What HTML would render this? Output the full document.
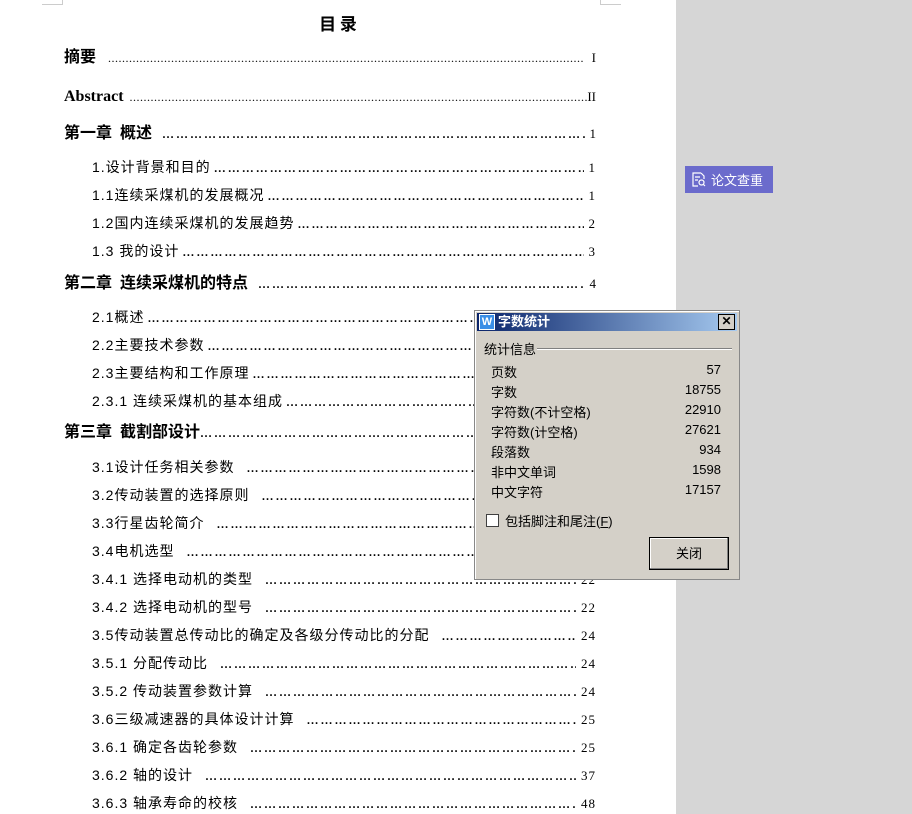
<!DOCTYPE html>
<html><head><meta charset="utf-8"><style>
body{margin:0;width:912px;height:814px;background:#d6d6d6;position:relative;overflow:hidden;font-family:"Liberation Serif","Noto Serif CJK SC","Noto Sans CJK SC",serif;color:#000}
.page{position:absolute;left:0;top:0;width:676px;height:814px;background:#fff}
.ln{position:absolute;display:flex;align-items:baseline;white-space:nowrap;height:20px;line-height:20px}
.ld{flex:1 1 0;min-width:0;overflow:hidden;white-space:nowrap;color:#000;font-family:"Liberation Serif",serif;font-size:12px;font-weight:bold;letter-spacing:2px;margin:0 5px 0 3px}
.ld::before{content:"…………………………………………………………………………………………………………………………………………………………………………………………………………"}
.ld.dot{font-weight:normal;letter-spacing:0.5px}
.ld.dot::before{content:"..........................................................................................................................................................................................................................................................................................."}
.pn{font-size:13px;font-family:"Liberation Serif",serif;font-weight:normal}
.h{font-weight:bold;font-size:16px;left:64px;width:532px;font-family:"Liberation Serif","Noto Sans CJK SC",sans-serif}
.s{font-size:14px;left:92px;width:504px;font-family:"Liberation Sans","Noto Sans CJK SC",sans-serif;letter-spacing:1px}
.dlg{position:absolute;left:474px;top:310px;width:264px;height:268px;background:#d4d0c8;border:1px solid #888;box-shadow:inset 1px 1px #fff;font-family:"Liberation Sans","Noto Sans CJK SC",sans-serif;font-size:13px}
.tb{position:absolute;left:2px;top:2px;right:2px;height:18px;background:linear-gradient(90deg,#0a246a,#a6caf0);color:#fff;font-weight:bold;font-size:13px;line-height:18px}
.r{position:absolute;left:16px;width:230px;display:flex;justify-content:space-between}
</style></head><body>
<div class="page">
<div style="position:absolute;left:42px;top:0;width:20px;height:4px;border:1px solid #ccc;border-top:none;border-left:none"></div>
<div style="position:absolute;left:600px;top:0;width:20px;height:4px;border:1px solid #ccc;border-top:none;border-right:none"></div>
<div style="position:absolute;left:0;width:676px;top:10px;text-align:center;font-weight:bold;font-size:17px;font-family:'Noto Sans CJK SC',sans-serif">目 录</div>

<div class="ln h" style="top:48px"><span>摘要</span><span class="ld dot" style="margin-left:12px;margin-right:8px"></span><span class="pn">I</span></div>
<div class="ln h" style="top:87px"><span>Abstract</span><span class="ld dot" style="margin-left:6px;margin-right:0"></span><span class="pn">II</span></div>
<div class="ln h" style="top:124px"><span>第一章&nbsp; 概述</span><span class="ld" style="margin-left:10px"></span><span class="pn">1</span></div>
<div class="ln s" style="top:157px"><span>1.设计背景和目的</span><span class="ld"></span><span class="pn">1</span></div>
<div class="ln s" style="top:185px"><span>1.1连续采煤机的发展概况</span><span class="ld"></span><span class="pn">1</span></div>
<div class="ln s" style="top:213px"><span>1.2国内连续采煤机的发展趋势</span><span class="ld"></span><span class="pn">2</span></div>
<div class="ln s" style="top:241px"><span>1.3 我的设计</span><span class="ld"></span><span class="pn">3</span></div>
<div class="ln h" style="top:274px"><span>第二章&nbsp; 连续采煤机的特点</span><span class="ld" style="margin-left:10px"></span><span class="pn">4</span></div>
<div class="ln s" style="top:307px"><span>2.1概述</span><span class="ld"></span><span class="pn">4</span></div>
<div class="ln s" style="top:335px"><span>2.2主要技术参数</span><span class="ld"></span><span class="pn">5</span></div>
<div class="ln s" style="top:363px"><span>2.3主要结构和工作原理</span><span class="ld"></span><span class="pn">6</span></div>
<div class="ln s" style="top:391px"><span>2.3.1 连续采煤机的基本组成</span><span class="ld"></span><span class="pn">6</span></div>
<div class="ln h" style="top:423px"><span>第三章&nbsp; 截割部设计</span><span class="ld" style="margin-left:0"></span><span class="pn">9</span></div>
<div class="ln s" style="top:457px"><span>3.1设计任务相关参数</span><span class="ld" style="margin-left:12px"></span><span class="pn">9</span></div>
<div class="ln s" style="top:485px"><span>3.2传动装置的选择原则</span><span class="ld" style="margin-left:12px"></span><span class="pn">10</span></div>
<div class="ln s" style="top:513px"><span>3.3行星齿轮简介</span><span class="ld" style="margin-left:12px"></span><span class="pn">12</span></div>
<div class="ln s" style="top:541px"><span>3.4电机选型</span><span class="ld" style="margin-left:12px"></span><span class="pn">21</span></div>
<div class="ln s" style="top:569px"><span>3.4.1 选择电动机的类型</span><span class="ld" style="margin-left:12px"></span><span class="pn">22</span></div>
<div class="ln s" style="top:597px"><span>3.4.2 选择电动机的型号</span><span class="ld" style="margin-left:12px"></span><span class="pn">22</span></div>
<div class="ln s" style="top:625px"><span>3.5传动装置总传动比的确定及各级分传动比的分配</span><span class="ld" style="margin-left:12px"></span><span class="pn">24</span></div>
<div class="ln s" style="top:653px"><span>3.5.1 分配传动比</span><span class="ld" style="margin-left:12px"></span><span class="pn">24</span></div>
<div class="ln s" style="top:681px"><span>3.5.2 传动装置参数计算</span><span class="ld" style="margin-left:12px"></span><span class="pn">24</span></div>
<div class="ln s" style="top:709px"><span>3.6三级减速器的具体设计计算</span><span class="ld" style="margin-left:12px"></span><span class="pn">25</span></div>
<div class="ln s" style="top:737px"><span>3.6.1 确定各齿轮参数</span><span class="ld" style="margin-left:12px"></span><span class="pn">25</span></div>
<div class="ln s" style="top:765px"><span>3.6.2 轴的设计</span><span class="ld" style="margin-left:12px"></span><span class="pn">37</span></div>
<div class="ln s" style="top:793px"><span>3.6.3 轴承寿命的校核</span><span class="ld" style="margin-left:12px"></span><span class="pn">48</span></div>
</div>

<div style="position:absolute;left:685px;top:166px;width:88px;height:27px;background:#6b6bcc;color:#fff;font-family:'Noto Sans CJK SC',sans-serif;font-size:13px;line-height:27px">
<svg style="position:absolute;left:7px;top:6px" width="14" height="15" viewBox="0 0 14 15" fill="none" stroke="#fff" stroke-width="1.2"><path d="M9 1H1v13h5M9 1l3 3v3M3 5h5M3 8h3"/><circle cx="9.5" cy="10.5" r="2.5"/><path d="M11.3 12.3L13 14"/></svg>
<span style="position:absolute;left:26px">论文查重</span></div>

<div class="dlg">
<div class="tb"><span style="display:inline-block;width:14px;height:14px;background:#3a8ee6;border:1px solid #fff;margin:1px 3px 0 2px;vertical-align:top;color:#fff;font-size:11px;line-height:14px;text-align:center">W</span>字数统计
<span style="position:absolute;right:2px;top:1px;width:15px;height:14px;background:#d4d0c8;border:1px solid #000;color:#000;font-size:12px;line-height:13px;text-align:center">✕</span></div>
<div style="position:absolute;left:9px;top:28px">统计信息</div>
<div style="position:absolute;left:62px;top:37px;width:195px;border-top:1px solid #808080;border-bottom:1px solid #fff"></div>
<div class="r" style="top:51px"><span>页数</span><span>57</span></div>
<div class="r" style="top:71px"><span>字数</span><span>18755</span></div>
<div class="r" style="top:91px"><span>字符数(不计空格)</span><span>22910</span></div>
<div class="r" style="top:111px"><span>字符数(计空格)</span><span>27621</span></div>
<div class="r" style="top:131px"><span>段落数</span><span>934</span></div>
<div class="r" style="top:151px"><span>非中文单词</span><span>1598</span></div>
<div class="r" style="top:171px"><span>中文字符</span><span>17157</span></div>
<div style="position:absolute;left:11px;top:203px;width:11px;height:11px;background:#fff;border:1px solid #404040"></div>
<div style="position:absolute;left:30px;top:200px">包括脚注和尾注(<u>F</u>)</div>
<div style="position:absolute;left:174px;top:226px;width:78px;height:31px;border:1px solid #000;box-shadow:inset -1px -1px #808080,inset 1px 1px #fff;text-align:center;line-height:31px">关闭</div>
</div>
</body></html>
